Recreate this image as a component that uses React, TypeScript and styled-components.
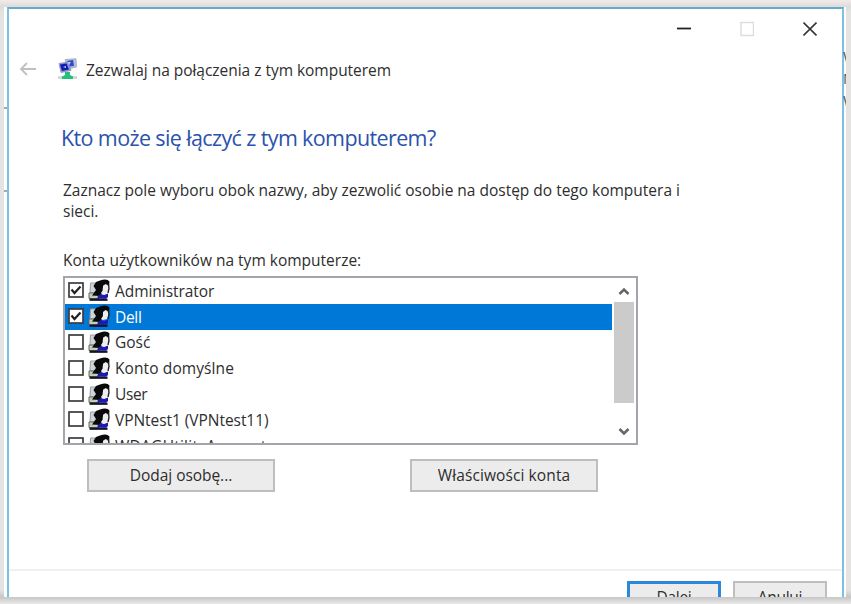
import React from "react";
import styled, { createGlobalStyle } from "styled-components";

const Global = createGlobalStyle`
  html, body { margin: 0; padding: 0; background: #e9e7e5; }
  * { box-sizing: border-box; }
`;

const Desktop = styled.div`
  width: 851px;
  height: 604px;
  overflow: hidden;
  padding: 7px 5px 7px 4px;
  background: linear-gradient(#f1ebe8, #dcdcdb 7px, #e4e3e2 12px, #e4e3e2 590px, #c6c6c6 597px, #e9e9e9);
  font-family: "Open Sans", "Noto Sans", sans-serif;
  font-size: 15.5px;
  font-weight: 450;
  color: #2e2e2e;
`;

const Screen = styled.div`
  position: relative;
  width: 842px;
  height: 590px;
  padding-left: 3px;
  overflow: hidden;
  background: #fdfdfd;
`;

const Window = styled.section`
  width: 837px;
  height: 620px;
  border: 2px solid #7cc0e6;
  border-top-color: #68a9cc;
  background: #fff;
  display: flex;
  flex-direction: column;
`;

const Tick = styled.i<{ $y: number }>`
  position: absolute;
  left: 0;
  top: ${(p) => p.$y}px;
  width: 3px;
  height: 2px;
  background: #aaa;
`;

const Clipped = styled.div`
  position: absolute;
  left: 839px;
  top: 38px;
  width: 3px;
  overflow: hidden;
  font-size: 15px;
  line-height: 22px;
  color: #555;
`;

const Controls = styled.div`
  height: 40px;
  flex: none;
  display: flex;
  justify-content: flex-end;
  gap: 49px;
  padding: 12px 25px 0 0;
`;

const Header = styled.header`
  height: 40px;
  flex: none;
  display: flex;
  align-items: center;
  padding-left: 10px;
`;

const BackArrow = styled.svg`
  width: 18px;
  height: 16px;
  margin-right: 20px;
`;

const Title = styled.span`
  margin: 1px 0 0 8px;
  letter-spacing: -0.03px;
  white-space: nowrap;
`;

const Content = styled.main`
  height: 480px;
  flex: none;
  padding: 34px 0 0 54px;
`;

const Heading = styled.h1`
  margin: 0 0 0 -2px;
  font-size: 21.5px;
  font-weight: 400;
  line-height: 30px;
  color: #2b52ad;
  letter-spacing: -0.62px;
  white-space: nowrap;
`;

const Intro = styled.p`
  margin: 27px 0 0;
  line-height: 21px;
  letter-spacing: -0.01px;
  white-space: nowrap;
`;

const ListLabel = styled.div`
  margin-top: 27px;
  line-height: 22px;
`;

const List = styled.div`
  width: 575px;
  height: 169px;
  margin-top: 5px;
  border: 2px solid #a2a5ac;
  display: flex;
  overflow: hidden;
`;

const Rows = styled.div`
  width: 547px;
  flex: none;
`;

const Row = styled.div<{ $selected: boolean }>`
  height: 25.8px;
  display: flex;
  align-items: center;
  gap: 4px;
  padding-left: 3px;
  background: ${(p) => (p.$selected ? "#0078d7" : "transparent")};
  color: ${(p) => (p.$selected ? "#fff" : "inherit")};
`;

const Name = styled.span<{ $ls: number }>`
  margin-left: 1px;
  letter-spacing: ${(p) => p.$ls}px;
  white-space: nowrap;
`;

const ScrollBar = styled.div`
  width: 20px;
  margin-left: 2px;
  display: flex;
  flex-direction: column;
  align-items: center;
`;

const Arrow = styled.svg`
  width: 12px;
  height: 24px;
  flex: none;
`;

const Thumb = styled.div`
  width: 20px;
  height: 101px;
  margin-bottom: auto;
  background: #cbcbcb;
`;

const Actions = styled.div`
  display: flex;
  gap: 135px;
  padding: 14px 0 0 24px;
`;

const Button = styled.div<{ $w: number; $ls?: number; $primary?: boolean }>`
  width: ${(p) => p.$w}px;
  height: 33px;
  border: ${(p) => (p.$primary ? "3px solid #2b88dc" : "2px solid #bebebe")};
  background: #ececec;
  display: flex;
  align-items: center;
  justify-content: center;
  padding-bottom: 2px;
  letter-spacing: ${(p) => p.$ls ?? -0.3}px;
`;

const Footer = styled.footer`
  height: 60px;
  flex: none;
  border-top: 2px solid #f0f0f0;
  display: flex;
  justify-content: flex-end;
  gap: 12px;
  padding: 10px 15px 0 0;
`;

const NetworkIcon = () => (
  <svg width="21" height="22" viewBox="0 0 21 22">
    <path d="M8 1.500 L19 .7 L19.500 9 L11 11Z" fill="#b5bfdd" stroke="#a5a9b8" strokeWidth=".8" />
    <path d="M10 3 L16 2 L17 8 L12 8.500Z" fill="#3448cc" />
    <path d="M2 5.500 L11 4 L14 12.500 L4 14.500Z" fill="#8894d6" stroke="#8c93ae" strokeWidth=".8" />
    <path d="M3 6.500 L9.500 5.500 L12 11.500 L5 13Z" fill="#111cb0" />
    <path d="M10.500 4 L14 4 L12 7Z M6 9 L9 8 L9 10Z" fill="#a8d8f5" />
    <path d="M1 19.500 H20" stroke="#cfd3d0" strokeWidth="2.500" />
    <path d="M8 14 H13 V17 L16 18.500 V21 H5 V18.500 L8 17Z" fill="#24c07e" />
  </svg>
);

const UserIcon = () => (
  <svg width="22" height="23" viewBox="0 0 22 23">
    <path d="M2.500 4 H11 V14 H2Z" fill="#cfd4d6" stroke="#999fa2" />
    <path d="M1 14 H11 V19.500 H1Z" fill="#c7ccca" stroke="#666" />
    <path d="M2 17 H6" stroke="#a5dc74" strokeWidth="1.500" />
    <path d="M1.500 20.700 H19.500" stroke="#151520" strokeWidth="2.300" />
    <path d="M5.500 7 L8 3 L12 1.500 Q19 -.8 21.500 2.500 L21 7 L16 6 Q14 9 15 12 L12 17 L4 16.500 L8 11Z" fill="#090909" />
    <path d="M15 7 L17.500 5 L19.500 6 L20.500 10 L19 14 L15 15 L13 14 L15 11Z" fill="#eee" />
    <path d="M20.500 5 L21 9.500 L20 14" stroke="#222" strokeWidth="1.400" fill="none" />
    <path d="M10 17 L13 15 L16 16 L20 14.500 V18 L18 19.700 H9Z" fill="#1d1ab0" />
  </svg>
);

const CheckIcon = ({ checked }: { checked: boolean }) => (
  <svg width="16" height="17" viewBox="0 0 16 17">
    <rect x="1" y="1" width="14" height="14" fill="#fff" stroke="#3c3c3c" strokeWidth="1.7" />
    {checked && <path d="M3.500 7.500 L6.500 11 L12.500 4.500" fill="none" stroke="#222" strokeWidth="2.200" />}
  </svg>
);

const users = [
  { name: "Administrator", checked: true, ls: -0.05 },
  { name: "Dell", checked: true, ls: -0.3 },
  { name: "Gość", checked: false, ls: 0 },
  { name: "Konto domyślne", checked: false, ls: 0.1 },
  { name: "User", checked: false, ls: -0.4 },
  { name: "VPNtest1 (VPNtest11)", checked: false, ls: -0.05 },
  { name: "WDAGUtilityAccount", checked: false, ls: 0.25 },
];

export default function App() {
  return (
    <Desktop>
      <Global />
      <Screen>
        <Window>
          <Controls>
            <svg width="14" height="16"><path d="M0 7.500H14" stroke="#222" strokeWidth="1.800" /></svg>
            <svg width="14" height="16"><rect x="1" y="1.500" width="12.500" height="13" fill="none" stroke="#dcdcdc" strokeWidth="1.400" /></svg>
            <svg width="14" height="16"><path d="M.5 1.500L13.500 14.500M13.500 1.500L.5 14.500" stroke="#333" strokeWidth="1.600" /></svg>
          </Controls>
          <Header>
            <BackArrow viewBox="0 0 18 16"><path d="M17 8H2M8 2L2 8L8 14" fill="none" stroke="#c0c0c0" strokeWidth="1.800" /></BackArrow>
            <NetworkIcon />
            <Title>Zezwalaj na połączenia z tym komputerem</Title>
          </Header>
          <Content>
            <Heading>Kto może się łączyć z tym komputerem?</Heading>
            <Intro>
              Zaznacz pole wyboru obok nazwy, aby zezwolić osobie na dostęp do tego komputera i<br />
              sieci.
            </Intro>
            <ListLabel>Konta użytkowników na tym komputerze:</ListLabel>
            <List>
              <Rows>
                {users.map((u, i) => (
                  <Row key={u.name} $selected={i === 1}>
                    <CheckIcon checked={u.checked} />
                    <UserIcon />
                    <Name $ls={u.ls}>{u.name}</Name>
                  </Row>
                ))}
              </Rows>
              <ScrollBar>
                <Arrow viewBox="0 0 12 24"><path d="M1.500 16L6 11.500L10.500 16" fill="none" stroke="#666" strokeWidth="2.500" /></Arrow>
                <Thumb />
                <Arrow viewBox="0 0 12 24"><path d="M1.500 10L6 14.500L10.500 10" fill="none" stroke="#666" strokeWidth="2.500" /></Arrow>
              </ScrollBar>
            </List>
            <Actions>
              <Button $w={188} $ls={-0.05}>Dodaj osobę...</Button>
              <Button $w={188} $ls={0.1}>Właściwości konta</Button>
            </Actions>
          </Content>
          <Footer>
            <Button $w={94} $primary>Dalej</Button>
            <Button $w={94}>Anuluj</Button>
          </Footer>
        </Window>
        <Tick $y={100} />
        <Tick $y={183} />
        <Clipped>W<br />N<br />W</Clipped>
      </Screen>
    </Desktop>
  );
}
